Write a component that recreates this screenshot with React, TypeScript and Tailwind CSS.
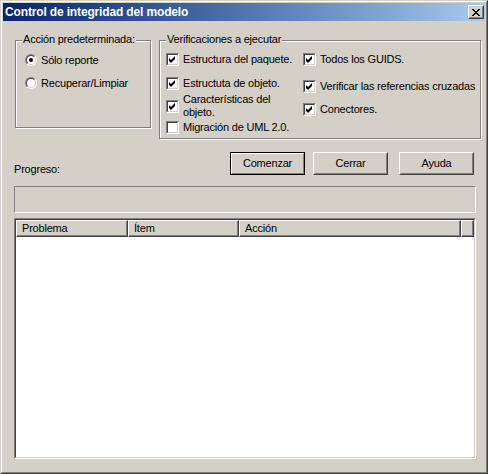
const FONT = { fontFamily: '"Liberation Sans", Arial, sans-serif' };

const X_GLYPH = ['XX....XX', '.XX..XX.', '..XXXX..', '...XX...', '..XXXX..', '.XX..XX.', 'XX....XX'];

function CloseGlyph() {
  return (
    <svg width="8" height="7" viewBox="0 0 8 7" shapeRendering="crispEdges">
      {X_GLYPH.flatMap((row, y) =>
        row.split('').map((c, x) => (c === 'X' ? <rect key={`${x}-${y}`} x={x} y={y} width="1" height="1" fill="#000" /> : null))
      )}
    </svg>
  );
}

function Checkbox({ checked }: { checked?: boolean }) {
  return (
    <div className="w-[13px] h-[13px] shrink-0 border border-t-[#808080] border-l-[#808080] border-b-white border-r-white">
      <div className="w-full h-full border border-t-[#404040] border-l-[#404040] border-b-[#d4d0c8] border-r-[#d4d0c8] bg-white">
        {checked && (
          <svg width="9" height="9" viewBox="0 0 9 9" className="block">
            <polygon points="1,3 3,5 7,1 7,4 3,8 1,6" fill="#000" />
          </svg>
        )}
      </div>
    </div>
  );
}

function Radio({ checked }: { checked?: boolean }) {
  return (
    <div className="w-[12px] h-[12px] shrink-0 rounded-full border border-t-[#808080] border-l-[#808080] border-b-white border-r-white">
      <div className="w-full h-full rounded-full border border-t-[#404040] border-l-[#404040] border-b-[#d4d0c8] border-r-[#d4d0c8] bg-white flex items-center justify-center">
        {checked && <div className="w-[4px] h-[4px] rounded-full bg-black" />}
      </div>
    </div>
  );
}

function Button({ label, isDefault }: { label: string; isDefault?: boolean }) {
  if (isDefault) {
    return (
      <div className="w-[75px] h-[23px] border border-black">
        <div className="w-full h-full border border-t-white border-l-white border-b-[#808080] border-r-[#808080] flex items-center justify-center text-[11px] text-black">
          {label}
        </div>
      </div>
    );
  }
  return (
    <div className="w-[75px] h-[23px] border border-t-white border-l-white border-b-[#404040] border-r-[#404040]">
      <div className="w-full h-full border border-t-[#d4d0c8] border-l-[#d4d0c8] border-b-[#808080] border-r-[#808080] flex items-center justify-center text-[11px] text-black">
        {label}
      </div>
    </div>
  );
}

function HeaderCell({ label, className }: { label?: string; className: string }) {
  return (
    <div className={`h-full border border-t-white border-l-white border-b-[#404040] border-r-[#404040] ${className}`}>
      <div className="w-full h-full border-r border-b border-[#808080] pl-[5px] flex items-center text-[11px] leading-[13px] text-black">
        {label}
      </div>
    </div>
  );
}

export default function App() {
  return (
    <div className="w-[488px] h-[474px] bg-[#d4d0c8] border border-t-[#d4d0c8] border-l-[#d4d0c8] border-b-[#404040] border-r-[#404040]" style={FONT}>
      <div className="w-full h-full border border-t-white border-l-white border-b-[#808080] border-r-[#808080] p-px flex flex-col">
        {/* title bar */}
        <div className="h-[18px] shrink-0 flex items-center bg-linear-to-r from-[#0a246a] to-[#a6caf0] pl-[2px] pr-[1px]">
          <span className="text-white font-bold text-[12px] leading-[14px] tracking-[-0.15px] whitespace-nowrap">Control de integridad del modelo</span>
          <div className="ml-auto w-[16px] h-[14px] border border-t-white border-l-white border-b-[#404040] border-r-[#404040]">
            <div className="w-full h-full border border-t-[#d4d0c8] border-l-[#d4d0c8] border-b-[#808080] border-r-[#808080] bg-[#d4d0c8] flex items-center justify-center">
              <CloseGlyph />
            </div>
          </div>
        </div>

        <div className="flex-1 flex flex-col pl-[11px] pr-[9px] text-[11px] leading-[13px] tracking-[-0.2px] text-black">
          {/* group boxes */}
          <div className="mt-[19px] -mr-[5px] flex gap-[8px] pl-px">
            <div className="relative w-[136px] h-[88px] shrink-0 border border-[#808080] shadow-[inset_1px_1px_0_#fff,1px_1px_0_#fff] pl-[9px] pt-[13px]">
              <span className="absolute left-[6px] top-[-8px] px-px bg-[#d4d0c8] whitespace-nowrap">Acción predeterminada:</span>
              <div className="flex flex-col gap-[11px]">
                <div className="flex items-center gap-[4px] h-[12px]">
                  <Radio checked />
                  <span className="whitespace-nowrap">Sólo reporte</span>
                </div>
                <div className="flex items-center gap-[4px] h-[12px]">
                  <Radio />
                  <span className="whitespace-nowrap">Recuperar/Limpiar</span>
                </div>
              </div>
            </div>

            <div className="relative w-[322px] h-[99px] shrink-0 border border-[#808080] shadow-[inset_1px_1px_0_#fff,1px_1px_0_#fff] pl-[6px] pt-[12px] flex">
              <span className="absolute left-[6px] top-[-8px] px-px bg-[#d4d0c8] whitespace-nowrap">Verificaciones a ejecutar</span>
              <div className="w-[137px] shrink-0 flex flex-col">
                <div className="flex items-center gap-[4px] h-[13px]">
                  <Checkbox checked />
                  <span className="whitespace-nowrap">Estructura del paquete.</span>
                </div>
                <div className="flex items-center gap-[4px] h-[13px] mt-[11px]">
                  <Checkbox checked />
                  <span className="whitespace-nowrap">Estructuta de objeto.</span>
                </div>
                <div className="flex items-center gap-[4px] mt-[3px]">
                  <Checkbox checked />
                  <span className="whitespace-nowrap">
                    Características del
                    <br />
                    objeto.
                  </span>
                </div>
                <div className="flex items-center gap-[4px] h-[13px] mt-[2px]">
                  <Checkbox />
                  <span className="whitespace-nowrap">Migración de UML 2.0.</span>
                </div>
              </div>
              <div className="flex flex-col">
                <div className="flex items-center gap-[4px] h-[13px]">
                  <Checkbox checked />
                  <span className="whitespace-nowrap">Todos los GUIDS.</span>
                </div>
                <div className="flex items-center gap-[4px] h-[13px] mt-[14px]">
                  <Checkbox checked />
                  <span className="whitespace-nowrap">Verificar las referencias cruzadas</span>
                </div>
                <div className="flex items-center gap-[4px] h-[13px] mt-[10px]">
                  <Checkbox checked />
                  <span className="whitespace-nowrap">Conectores.</span>
                </div>
              </div>
            </div>
          </div>

          {/* progress label + buttons */}
          <div className="mt-[13px] flex items-start">
            <span className="mt-[11px]">Progreso:</span>
            <div className="ml-auto mr-[2px] flex">
              <Button label="Comenzar" isDefault />
              <div className="ml-[8px]">
                <Button label="Cerrar" />
              </div>
              <div className="ml-[11px]">
                <Button label="Ayuda" />
              </div>
            </div>
          </div>

          {/* progress box */}
          <div className="mt-[10px] h-[27px] border border-t-[#808080] border-l-[#808080] border-b-white border-r-white" />

          {/* list view */}
          <div className="mt-[5px] h-[241px] border border-t-[#808080] border-l-[#808080] border-b-white border-r-white">
            <div className="w-full h-full border border-t-[#404040] border-l-[#404040] border-b-[#d4d0c8] border-r-[#d4d0c8] bg-white flex flex-col">
              <div className="h-[17px] flex bg-[#d4d0c8]">
                <HeaderCell label="Problema" className="w-[112px]" />
                <HeaderCell label="Ítem" className="w-[111px]" />
                <HeaderCell label="Acción" className="w-[222px]" />
                <HeaderCell className="flex-1" />
              </div>
            </div>
          </div>
        </div>
      </div>
    </div>
  );
}
